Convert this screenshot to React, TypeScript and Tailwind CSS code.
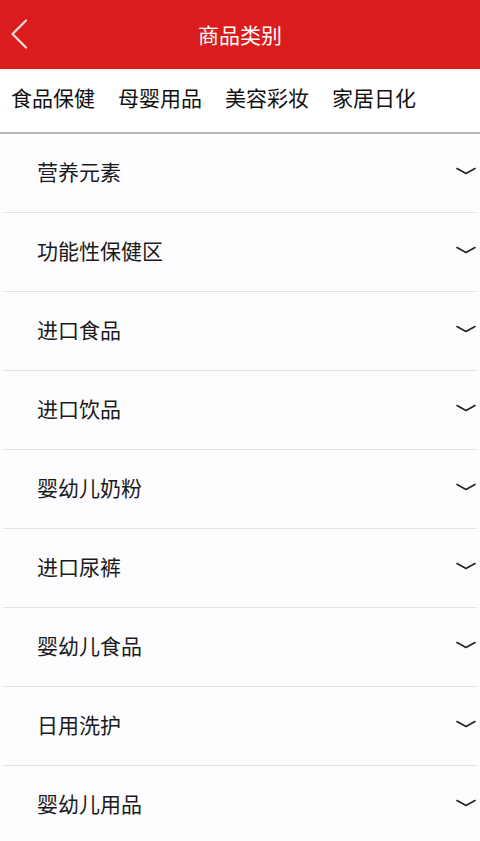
import React from "react";

const tabs = ["食品保健", "母婴用品", "美容彩妆", "家居日化"];
const items = [
  "营养元素",
  "功能性保健区",
  "进口食品",
  "进口饮品",
  "婴幼儿奶粉",
  "进口尿裤",
  "婴幼儿食品",
  "日用洗护",
  "婴幼儿用品",
];

function Chevron() {
  return (
    <svg width="20" height="8" viewBox="0 0 20 8" fill="none">
      <path d="M1 1.5 L10 6.5 L19 1.5" stroke="#222" strokeWidth="1.6" strokeLinecap="round" strokeLinejoin="round" />
    </svg>
  );
}

export default function App() {
  const font = { fontFamily: '"Noto Sans CJK SC", "Noto Sans", sans-serif' };
  return (
    <div className="w-[480px] h-[841px] overflow-hidden bg-[#fdfcfe]" style={font}>
      <div className="relative h-[69px] bg-[#db1c1c] flex items-center justify-center">
        <svg className="absolute left-[10px] top-[19px]" width="18" height="30" viewBox="0 0 18 30" fill="none">
          <path d="M16 1.5 L2.5 15 L16 28.5" stroke="#f6dede" strokeWidth="2.2" strokeLinecap="round" strokeLinejoin="round" />
        </svg>
        <span className="text-white text-[21px] leading-none">商品类别</span>
      </div>
      <div className="h-[65px] bg-white flex items-center pl-[11px] pb-[7px] gap-[23px] border-b-2 border-[#b8b8b8]">
        {tabs.map((t) => (
          <span key={t} className="text-[21px] leading-none text-[#111]">
            {t}
          </span>
        ))}
      </div>
      <div className="flex flex-col">
        {items.map((t) => (
          <div key={t} className="h-[79px] mx-[3px] flex items-center justify-between border-b border-[#e2e2e4]">
            <span className="pl-[34px] -mt-[4px] text-[21px] leading-none text-[#1a1a1a]">{t}</span>
            <span className="mr-[1px] -mt-[4px]">
              <Chevron />
            </span>
          </div>
        ))}
      </div>
    </div>
  );
}
